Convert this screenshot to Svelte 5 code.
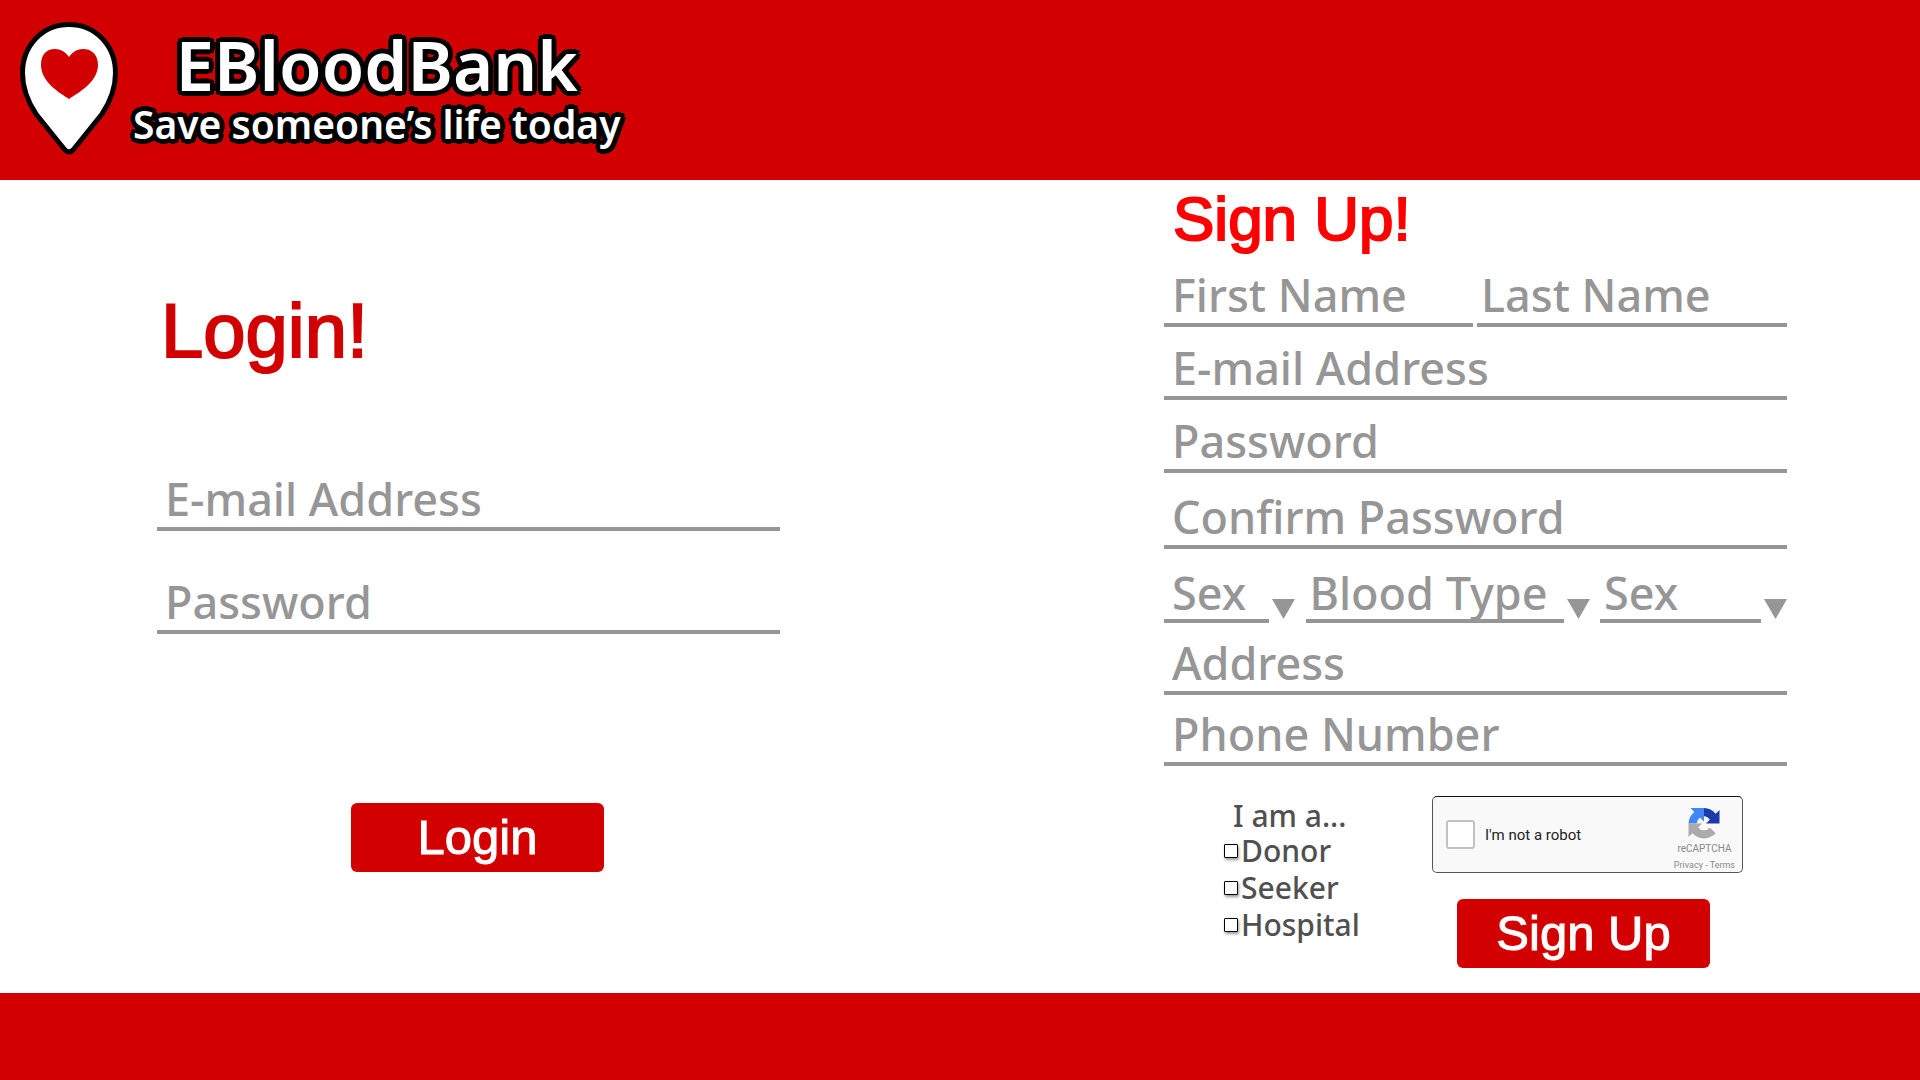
<script>
  const roles = ['Donor', 'Seeker', 'Hospital'];
  const choices = [
    { name: 'Sex', size: 'short' },
    { name: 'Blood Type', size: 'long' },
    { name: 'Sex', size: 'medium' }
  ];
</script>

<div class="page">
  <header>
    <svg class="pin" viewBox="0 0 98 133" aria-hidden="true">
      <path d="M45 128L16 92C8 80 2.5 66 2.5 51C2.5 23 23 2.5 49 2.5S95.5 23 95.5 51C95.5 66 90 80 82 92L53 128Q49 132 45 128Z" fill="#fff" stroke="#000" stroke-width="5" stroke-linejoin="round" />
      <path d="M49 77C40 71 21 60 21 43C21 33 26 27 35 27C42 27 46 31 49 35C52 31 56 27 63 27C72 27 78 33 78 43C78 60 58 71 49 77Z" fill="#d20000" />
    </svg>
    <div class="brand">
      <h1>EBloodBank</h1>
      <p>Save someone’s life today</p>
    </div>
  </header>

  <main>
    <form class="login">
      <h2>Login!</h2>
      <input type="email" placeholder="E-mail Address" aria-label="E-mail Address" />
      <input type="password" placeholder="Password" aria-label="Password" />
      <button type="button">Login</button>
    </form>

    <form class="signup">
      <h2>Sign Up!</h2>
      <div class="fields">
        <div class="names">
          <input type="text" placeholder="First Name" aria-label="First Name" />
          <input type="text" placeholder="Last Name" aria-label="Last Name" />
        </div>
        <input type="email" placeholder="E-mail Address" aria-label="E-mail Address" />
        <input type="password" placeholder="Password" aria-label="Password" />
        <input type="password" placeholder="Confirm Password" aria-label="Confirm Password" />
        <div class="choices">
          {#each choices as choice}
            <div class="choice {choice.size}">
              <select aria-label={choice.name}><option>{choice.name}</option></select>
              <svg class="arrow" viewBox="0 0 23 20" aria-hidden="true"><path d="M0 0H23L11.5 20Z" /></svg>
            </div>
          {/each}
        </div>
        <input type="text" placeholder="Address" aria-label="Address" />
        <input type="tel" placeholder="Phone Number" aria-label="Phone Number" />
      </div>

      <div class="finish">
        <fieldset>
          <legend>I am a...</legend>
          {#each roles as role}
            <label><input type="checkbox" />{role}</label>
          {/each}
        </fieldset>
        <div class="submit">
          <div class="captcha">
            <label><input type="checkbox" />I'm not a robot</label>
            <div class="badge">
              <svg viewBox="0 0 64 64" aria-hidden="true">
                <path fill="#1c3aa9" d="M64 32V4L56 12A32 32 0 0 0 32 0V17A15 15 0 0 1 44 24L36 32Z" />
                <path fill="#4285f4" d="M32 0H4L12 8A32 32 0 0 0 0 32H17A15 15 0 0 1 24 20L32 28Z" />
                <path fill="#ababab" d="M0 32V60L8 52A32 32 0 0 0 56 52L44 40A15 15 0 0 1 20 40L28 32Z" />
              </svg>
              <span class="name">reCAPTCHA</span>
              <span class="legal"><a href="#privacy">Privacy</a> - <a href="#terms">Terms</a></span>
            </div>
          </div>
          <button type="button">Sign Up</button>
        </div>
      </div>
    </form>
  </main>

  <footer></footer>
</div>

<style>
  :global(body) {
    margin: 0;
    background: #fff;
  }
  .page {
    display: flex;
    flex-direction: column;
    min-height: 100vh;
    font-family: 'Noto Sans', sans-serif;
  }
  h1, h2, p, fieldset, legend, form {
    margin: 0;
    padding: 0;
    border: 0;
  }
  header {
    display: flex;
    gap: 15px;
    min-height: 180px;
    box-sizing: border-box;
    padding: 22px 20px;
    background: #d20000;
  }
  .pin {
    width: 98px;
    height: 133px;
    flex: none;
  }
  .brand {
    display: flex;
    flex-direction: column;
    align-items: center;
    color: #fff;
    white-space: nowrap;
  }
  /* Round black outline, 5px in every direction */
  h1, p {
    font-weight: 600;
    text-shadow:
      5px 0 #000, 4px 3px #000, 3px 4px #000, 0 5px #000,
      -3px 4px #000, -4px 3px #000, -5px 0 #000, -4px -3px #000,
      -3px -4px #000, 0 -5px #000, 3px -4px #000, 4px -3px #000;
  }
  h1 {
    font-size: 69px;
    line-height: 84px;
  }
  p {
    font-size: 39px;
    line-height: 36px;
  }
  main {
    flex: 1;
    display: flex;
    justify-content: space-between;
    gap: 40px;
    padding: 0 133px 0 157px;
  }
  form {
    display: flex;
    flex-direction: column;
    width: 623px;
    min-width: 0;
  }
  h2 {
    font-family: 'Liberation Sans', sans-serif;
    font-weight: 400;
    -webkit-text-stroke: 2px currentColor;
  }
  .login {
    padding-top: 108px;
  }
  .login h2 {
    padding-left: 4px;
    margin-bottom: 94px;
    font-size: 76px;
    line-height: 86px;
    padding-bottom: 2px;
    color: #d20000;
  }
  .signup h2 {
    padding-left: 9px;
    font-size: 62px;
    line-height: 78px;
    color: #f00;
  }
  input, select {
    box-sizing: border-box;
    min-width: 0;
    margin: 0;
    border: 0;
    border-radius: 0;
    background: transparent;
    font: 500 45px 'Noto Sans', sans-serif;
    color: #969696;
  }
  .login > input, .names input, .fields > input {
    width: 100%;
    height: 61px;
    padding: 0 8px;
    border-bottom: 4px solid #969696;
  }
  .names input + input {
    padding: 0 4px;
  }
  input::placeholder {
    color: #969696;
    opacity: 1;
  }
  .login > input + input {
    margin-top: 42px;
  }
  button {
    width: 253px;
    height: 69px;
    padding: 0 0 2px;
    border: 0;
    border-radius: 6px;
    background: #d20000;
    color: #fff;
    font: 400 49px 'Liberation Sans', sans-serif;
    -webkit-text-stroke: 1px currentColor;
  }
  .login button {
    margin: 169px 0 0 194px;
  }
  .fields {
    display: grid;
    grid-template-rows: 69px 73px 73px 76px 74px 72px 71px;
    align-items: end;
  }
  .names {
    display: grid;
    grid-template-columns: 309px 1fr;
    gap: 4px;
  }
  .choices {
    display: flex;
    justify-content: space-between;
  }
  .choice {
    display: flex;
    align-items: flex-end;
    gap: 3px;
  }
  .short {
    width: 131px;
  }
  .long {
    width: 284px;
  }
  .medium {
    width: 187px;
  }
  .choice select {
    flex: 1;
    appearance: none;
    height: 61px;
    padding: 0 4px;
    border-bottom: 4px solid #969696;
  }
  .short select {
    padding: 0 8px;
  }
  .arrow {
    flex: none;
    width: 23px;
    height: 20px;
    margin-bottom: 4px;
    fill: #969696;
  }
  .finish {
    display: flex;
    justify-content: space-between;
    padding: 30px 44px 25px 60px;
  }
  fieldset {
    font-size: 30px;
    font-weight: 500;
    line-height: 37px;
    color: #505050;
  }
  legend {
    padding: 4px 0 0 9px;
    line-height: 32px;
  }
  fieldset label {
    display: flex;
    align-items: center;
    gap: 3px;
  }
  fieldset input {
    appearance: none;
    width: 14px;
    height: 14px;
    border: 1px solid #000;
    border-radius: 1px;
    background: #fff;
    box-shadow: 1px 2px 3px #0006;
  }
  .submit {
    display: flex;
    flex-direction: column;
    gap: 26px;
  }
  .submit button {
    margin-left: 25px;
  }
  .captcha {
    box-sizing: border-box;
    display: flex;
    justify-content: space-between;
    width: 311px;
    height: 77px;
    padding: 0 7px 0 13px;
    border: 1px solid #555;
    border-top-color: #111;
    border-radius: 5px;
    background: #f9f9f9;
    font-family: Roboto, sans-serif;
  }
  .captcha label {
    display: flex;
    align-items: center;
    gap: 10px;
    font-size: 15px;
    color: #222;
  }
  .captcha input {
    appearance: none;
    width: 29px;
    height: 29px;
    border: 2px solid #c1c1c1;
    border-radius: 3px;
    background: #fff;
  }
  .badge {
    display: flex;
    flex-direction: column;
    align-items: center;
    padding-top: 11px;
    color: #888;
  }
  .badge svg {
    width: 32px;
    height: 32px;
  }
  .name {
    font-size: 10px;
    line-height: 20px;
  }
  .legal {
    font-size: 9px;
    line-height: 13px;
  }
  .legal a {
    color: inherit;
    text-decoration: none;
  }
  footer {
    height: 87px;
    background: #d20000;
  }
</style>
